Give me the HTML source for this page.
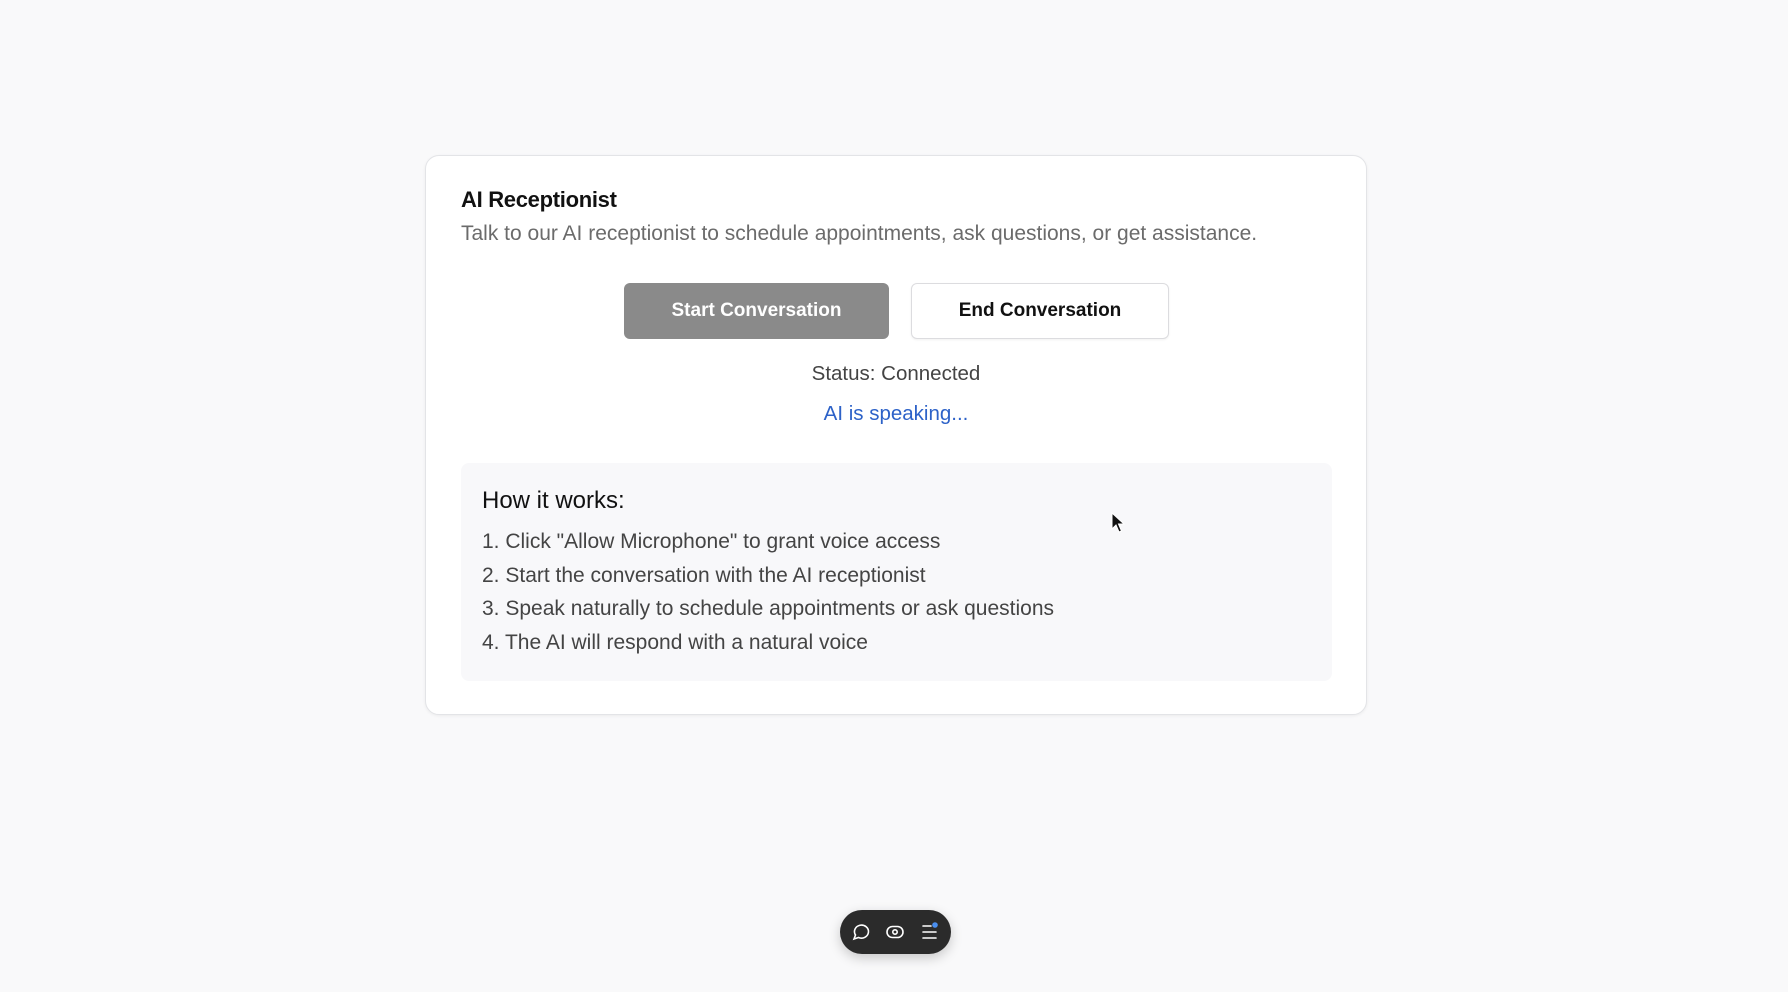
<!DOCTYPE html>
<html><head><style>
body{margin:0;width:1788px;height:992px;background:#f9f9fa;font-family:"Liberation Sans",sans-serif;position:relative;overflow:hidden}
.card{position:absolute;left:425px;top:155px;width:940px;height:558px;background:#fff;border:1px solid #e3e4e7;border-radius:14px;box-shadow:0 1px 3px rgba(0,0,0,.06)}
.t{position:absolute;left:35px;top:31px;font-size:22px;font-weight:bold;color:#111;letter-spacing:-0.3px}
.s{position:absolute;left:35px;top:66px;font-size:21px;color:#6b6b6b}
.b{position:absolute;top:127px;height:56px;border-radius:6px;font-size:19px;font-weight:bold;display:flex;align-items:center;justify-content:center;box-sizing:border-box}
.b1{left:198px;width:265px;background:#8a8a8a;color:#fff}
.b2{left:485px;width:258px;background:#fff;border:1px solid #dcdcdf;color:#111;box-shadow:0 1px 2px rgba(0,0,0,.06)}
.c{position:absolute;left:0;width:100%;text-align:center;font-size:20.5px}
.box{position:absolute;left:35px;top:307px;width:871px;height:218px;background:#f8f8fa;border-radius:8px}
.h{position:absolute;left:21px;top:24px;font-size:24px;color:#111}
.li{position:absolute;left:21px;font-size:21px;color:#444}
.tb{position:absolute;left:840px;top:910px;width:111px;height:44px;background:#2b2b2b;border-radius:22px;box-shadow:0 4px 12px rgba(0,0,0,.2)}
</style></head><body>
<div class="card">
<div class="t">AI Receptionist</div>
<div class="s">Talk to our AI receptionist to schedule appointments, ask questions, or get assistance.</div>
<div class="b b1">Start Conversation</div>
<div class="b b2">End Conversation</div>
<div class="c" style="top:206px;color:#444">Status: Connected</div>
<div class="c" style="top:246px;color:#2d62c8">AI is speaking...</div>
<div class="box">
<div class="h">How it works:</div>
<div class="li" style="top:67px">1. Click "Allow Microphone" to grant voice access</div>
<div class="li" style="top:101px">2. Start the conversation with the AI receptionist</div>
<div class="li" style="top:134px">3. Speak naturally to schedule appointments or ask questions</div>
<div class="li" style="top:168px">4. The AI will respond with a natural voice</div>
</div>
</div>
<div class="tb">
<svg width="111" height="44" viewBox="0 0 111 44" fill="none" stroke="#fff" stroke-width="1.6" stroke-linecap="round">
<path d="M14 29 l1.5-4 a7 6.5 0 1 1 3 2.5 z"/>
<rect x="47" y="16.5" width="16" height="11" rx="5.5"/><circle cx="55" cy="22" r="2.2"/>
<path d="M83 16h8M83 22h13M83 28h13"/>
<circle cx="95" cy="15" r="2.8" fill="#4a8ff0" stroke="none"/>
</svg>
</div>
<svg style="position:absolute;left:1111px;top:512px" width="16" height="22" viewBox="0 0 16 22"><path d="M1 1 L1 17 L5 13 L8 20 L10.5 19 L7.5 12 L13 12 Z" fill="#111" stroke="#fff" stroke-width="1"/></svg>
</body></html>
